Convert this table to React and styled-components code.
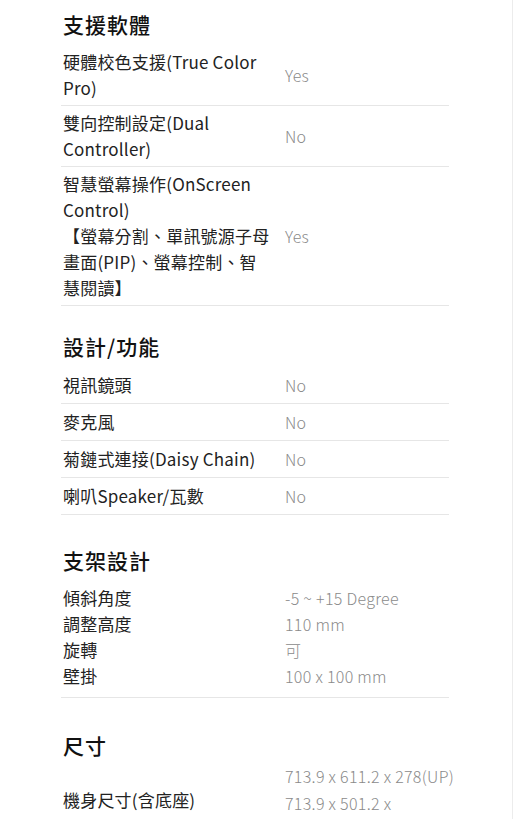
import React from "react";
import styled, { createGlobalStyle } from "styled-components";

const GlobalStyle = createGlobalStyle`
  html, body { margin: 0; padding: 0; background: #fff; }
  body {
    font-family: "Noto Sans CJK TC", "Noto Sans", sans-serif;
    -webkit-font-smoothing: antialiased;
  }
`;

const Page = styled.div`
  box-sizing: border-box;
  width: 513px;
  min-height: 100vh;
  border-right: 1px solid #ececec;
  overflow: hidden;
`;

const Container = styled.div`
  width: 388px;
  margin: 0 auto;
  padding-top: 9px;
  transform: translateX(-1px);
`;

const Section = styled.section`
  margin-top: ${(p) => p.$top || 0}px;
`;

const Heading = styled.h2`
  margin: 0 0 ${(p) => (p.$gap != null ? p.$gap : 6)}px;
  padding-left: 2px;
  font-size: 21px;
  line-height: 30px;
  font-weight: 500;
  letter-spacing: 1px;
  color: #111;
`;

const Row = styled.div`
  display: grid;
  grid-template-columns: 224px minmax(0, 1fr);
  align-items: center;
  padding: 4px 0;
  border-bottom: 1px solid #e6e6e6;
`;

const Label = styled.div`
  box-sizing: border-box;
  width: 210px;
  padding-left: 2px;
  font-size: 17px;
  line-height: 26px;
  letter-spacing: 0.2px;
  color: #222;
`;

const Value = styled.div`
  font-size: 16px;
  line-height: 28px;
  font-weight: 300;
  letter-spacing: 0.3px;
  color: #8a8a8a;
  margin-right: ${(p) => (p.$wide ? -20 : 0)}px;
`;

const List = styled.div`
  padding: ${(p) => p.$pt || 0}px 0 ${(p) => p.$pb || 0}px;
  border-bottom: ${(p) => (p.$ruled ? "1px solid #e6e6e6" : "none")};
`;

const PlainRow = styled.div`
  display: grid;
  grid-template-columns: 224px minmax(0, 1fr);
  align-items: center;
`;

const PlainLabel = styled(Label)`
  padding-bottom: ${(p) => p.$lift || 0}px;
`;

const PlainValue = styled(Value)`
  line-height: ${(p) => p.$lh || 26}px;
`;

const software = [
  { label: "硬體校色支援(True Color Pro)", value: "Yes" },
  { label: "雙向控制設定(Dual Controller)", value: "No" },
  {
    label: (
      <>
        智慧螢幕操作(OnScreen Control)
        <br />
        【螢幕分割、單訊號源子母畫面(PIP)、螢幕控制、智慧閱讀】
      </>
    ),
    value: "Yes",
  },
];

const design = [
  { label: "視訊鏡頭", value: "No" },
  { label: "麥克風", value: "No" },
  { label: "菊鏈式連接(Daisy Chain)", value: "No" },
  { label: "喇叭Speaker/瓦數", value: "No" },
];

const stand = [
  { label: "傾斜角度", value: "-5 ~ +15 Degree" },
  { label: "調整高度", value: "110 mm" },
  { label: "旋轉", value: "可" },
  { label: "壁掛", value: "100 x 100 mm" },
];

export default function App() {
  return (
    <>
      <GlobalStyle />
      <Page>
        <Container>
          <Section>
            <Heading>支援軟體</Heading>
            {software.map((r, i) => (
              <Row key={i}>
                <Label>{r.label}</Label>
                <Value>{r.value}</Value>
              </Row>
            ))}
          </Section>

          <Section $top={25}>
            <Heading>設計/功能</Heading>
            {design.map((r, i) => (
              <Row key={i}>
                <Label>{r.label}</Label>
                <Value>{r.value}</Value>
              </Row>
            ))}
          </Section>

          <Section $top={30}>
            <Heading>支架設計</Heading>
            <List $pt={4} $pb={8} $ruled>
              {stand.map((r, i) => (
                <PlainRow key={i}>
                  <PlainLabel>{r.label}</PlainLabel>
                  <PlainValue>{r.value}</PlainValue>
                </PlainRow>
              ))}
            </List>
          </Section>

          <Section $top={32}>
            <Heading $gap={3}>尺寸</Heading>
            <List>
              <PlainRow>
                <PlainLabel $lift={8}>機身尺寸(含底座)</PlainLabel>
                <PlainValue $lh={27} $wide>
                  713.9 x 611.2 x 278(UP)
                  <br />
                  713.9 x 501.2 x 278(DOWN)
                </PlainValue>
              </PlainRow>
            </List>
          </Section>
        </Container>
      </Page>
    </>
  );
}
